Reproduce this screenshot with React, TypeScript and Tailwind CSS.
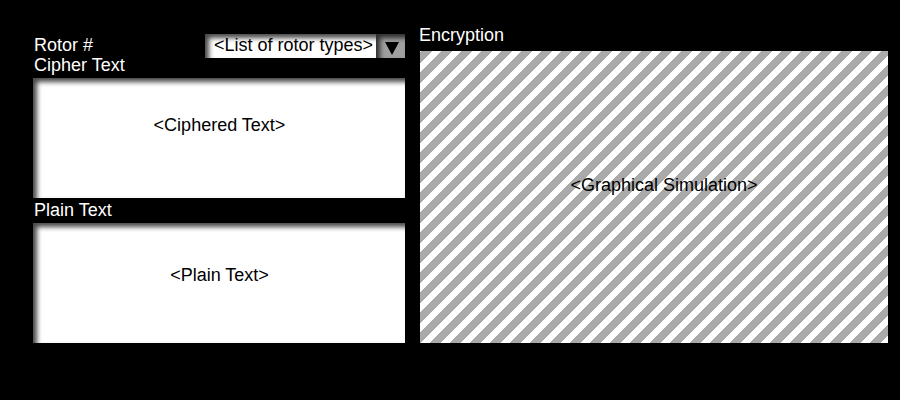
import { useState } from "react";

function Panel({ id, label, placeholder, pad }: { id: string; label: string; placeholder: string; pad: string }) {
  return (
    <div className="flex flex-col">
      <label htmlFor={id} className="h-6 pt-px pl-px">{label}</label>
      <textarea
        id={id}
        placeholder={placeholder}
        className={`block h-30 w-full resize-none bg-white pl-px text-center text-black shadow-[inset_4px_4px_5px_#000000b8] outline-none placeholder:text-black ${pad}`}
      />
    </div>
  );
}

export default function App() {
  const [rotor, setRotor] = useState("");
  return (
    <main className="grid min-h-screen grid-cols-[372fr_468fr] items-start gap-x-[15px] bg-black pr-3 pb-12 pl-[33px] font-['Liberation_Sans',Arial,sans-serif] text-[18px] leading-5 text-white">
      <form className="flex flex-col pt-[34px]">
        <div className="flex h-5 justify-between">
          <label htmlFor="rotor" className="pt-px pl-px">Rotor #</label>
          <div className="relative h-6 w-[200px]">
            <select
              id="rotor"
              value={rotor}
              onChange={(e) => setRotor(e.target.value)}
              className="block h-6 w-full appearance-none bg-white pr-5 pb-0.5 pl-[9px] leading-5 text-black shadow-[inset_4px_4px_5px_#000000b8] outline-none"
            >
              <option value="">&lt;List of rotor types&gt;</option>
            </select>
            <span className="pointer-events-none absolute inset-y-0 right-0 flex w-[29px] items-center justify-center bg-[#a0a0a0] pt-1 pl-[3px] shadow-[inset_4px_4px_5px_#000000b8]">
              <svg viewBox="0 0 14 13" className="h-[13px] w-[14px]" aria-hidden="true">
                <path d="M0 0H14L7 13Z" fill="#000" />
              </svg>
            </span>
          </div>
        </div>
        <Panel id="cipher" label="Cipher Text" placeholder="<Ciphered Text>" pad="pt-[37px]" />
        <div className="h-px" />
        <Panel id="plain" label="Plain Text" placeholder="<Plain Text>" pad="pt-[42px]" />
      </form>
      <section className="-ml-px flex flex-col pt-[25px]">
        <h2 className="h-[26px]">Encryption</h2>
        <div className="ml-px flex h-[292px] justify-center bg-[linear-gradient(135deg,#fff_4%,#aaa_4%_32%,#fff_32%_54%,#aaa_54%_82%,#fff_82%)] bg-size-[20px_20px] pt-[124px] pl-5 text-black">
          <p>&lt;Graphical Simulation&gt;</p>
        </div>
      </section>
    </main>
  );
}
